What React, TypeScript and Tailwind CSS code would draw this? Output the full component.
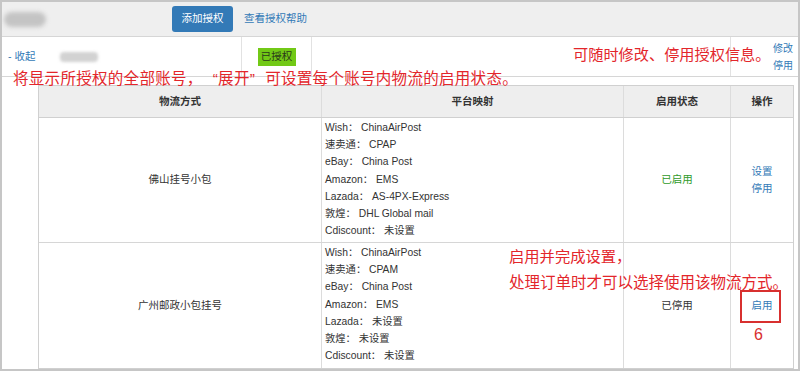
// Authorized accounts panel with per-account logistics table and red callouts.

const FONT = { fontFamily: '"Liberation Sans", "Noto Sans CJK SC", sans-serif' };

type Row = {
  name: string;
  mappings: [string, string][];
  enabled: boolean;
};

const rows: Row[] = [
  {
    name: "佛山挂号小包",
    enabled: true,
    mappings: [
      ["Wish", "ChinaAirPost"],
      ["速卖通", "CPAP"],
      ["eBay", "China Post"],
      ["Amazon", "EMS"],
      ["Lazada", "AS-4PX-Express"],
      ["敦煌", "DHL Global mail"],
      ["Cdiscount", "未设置"],
    ],
  },
  {
    name: "广州邮政小包挂号",
    enabled: false,
    mappings: [
      ["Wish", "ChinaAirPost"],
      ["速卖通", "CPAM"],
      ["eBay", "China Post"],
      ["Amazon", "EMS"],
      ["Lazada", "未设置"],
      ["敦煌", "未设置"],
      ["Cdiscount", "未设置"],
    ],
  },
];

export default function App() {
  return (
    <div
      style={FONT}
      className="relative h-[371px] w-[800px] overflow-hidden border-2 border-[#c6c6c6] bg-white text-[10px] text-[#333]"
    >
      {/* Top toolbar */}
      <div className="flex h-[35px] items-center border-b border-[#d6d6d6] bg-[#efefef]">
        <div className="ml-[2px] h-[15px] w-[42px] rounded-full bg-[#c4c4c4] blur-[2px]" />
        <button className="ml-[126px] h-[26px] w-[61px] rounded-[3px] bg-[#337ab7] text-[10.5px] text-white">
          添加授权
        </button>
        <span className="ml-[11px] text-[10.5px] text-[#337ab7]">查看授权帮助</span>
      </div>

      {/* Account row */}
      <div className="flex h-[40px] border-b border-[#d6d6d6]">
        <div className="flex w-[240px] items-center border-r border-[#e2e2e2] pl-[6px]">
          <span className="text-[10.5px] text-[#337ab7]">- 收起</span>
          <div className="ml-[25px] h-[10px] w-[38px] rounded-sm bg-[#d2d2d2] blur-[1.5px]" />
        </div>
        <div className="flex w-[70px] items-center justify-center border-r border-[#e2e2e2]">
          <span className="flex h-[18px] w-[38px] items-center justify-center bg-[#72c916] text-[10.5px] text-[#2a3a1a]">
            已授权
          </span>
        </div>
        <div className="flex-1 border-r border-[#e2e2e2]" />
        <div className="flex w-[67px] flex-col items-end justify-center pr-[5px] leading-[17px] text-[10px] text-[#337ab7]">
          <span>修改</span>
          <span>停用</span>
        </div>
      </div>

      <div className="h-[8px]" />

      {/* Logistics table */}
      <div className="ml-[36px] w-[756px] border border-[#d0d0d0]">
        <div className="flex h-[32px] border-b border-[#d0d0d0] bg-[#eeeeee] text-[10.5px] font-bold text-[#333]">
          <div className="flex w-[283px] items-center justify-center border-r border-[#dcdcdc]">物流方式</div>
          <div className="flex w-[302px] items-center justify-center border-r border-[#dcdcdc]">平台映射</div>
          <div className="flex w-[107px] items-center justify-center border-r border-[#dcdcdc]">启用状态</div>
          <div className="flex flex-1 items-center justify-center">操作</div>
        </div>
        {rows.map((row, i) => (
          <div
            key={row.name}
            className={`flex h-[125px] ${i === 0 ? "border-b border-[#d6d6d6]" : ""}`}
          >
            <div className="flex w-[283px] items-center justify-center border-r border-[#dcdcdc] text-[10.5px]">
              {row.name}
            </div>
            <div className="w-[302px] border-r border-[#dcdcdc] pl-[3px] pt-[1px] leading-[17.2px] text-[10.3px]">
              {row.mappings.map(([k, v]) => (
                <div key={k}>
                  {k}：&nbsp;{v}
                </div>
              ))}
            </div>
            <div
              className={`flex w-[107px] items-center justify-center border-r border-[#dcdcdc] text-[10.5px] ${
                row.enabled ? "text-[#2f9a2a]" : "text-[#333]"
              }`}
            >
              {row.enabled ? "已启用" : "已停用"}
            </div>
            <div className="flex flex-1 flex-col items-center justify-center leading-[17px] text-[10.5px] text-[#337ab7]">
              {row.enabled ? (
                <>
                  <span>设置</span>
                  <span>停用</span>
                </>
              ) : (
                <span>启用</span>
              )}
            </div>
          </div>
        ))}
      </div>

      {/* Red callouts drawn over the screenshot */}
      <div className="pointer-events-none absolute left-[11px] top-[67px] whitespace-nowrap text-[15.5px] leading-[20px] tracking-[0.3px] text-[#e3262b]">
        将显示所授权的全部账号，
        <span className="inline-block w-[1em] text-right">“</span>
        展开
        <span className="inline-block w-[1em] text-left">”</span>
        可设置每个账号内物流的启用状态。
      </div>
      <div className="pointer-events-none absolute left-[571px] top-[43px] whitespace-nowrap text-[15.2px] leading-[20px] text-[#e3262b]">
        可随时修改、停用授权信息。
      </div>
      <div className="pointer-events-none absolute left-[507px] top-[245px] whitespace-nowrap text-[15.3px] leading-[20px] text-[#e3262b]">
        启用并完成设置，
      </div>
      <div className="pointer-events-none absolute left-[507px] top-[271px] whitespace-nowrap text-[15.5px] leading-[20px] text-[#e3262b]">
        处理订单时才可以选择使用该物流方式。
      </div>
      <div className="pointer-events-none absolute left-[738px] top-[288px] h-[33px] w-[41px] border-2 border-[#d8302f]" />
      <div className="pointer-events-none absolute left-[752px] top-[323px] text-[16px] leading-[20px] text-[#d8302f]">
        6
      </div>
    </div>
  );
}
